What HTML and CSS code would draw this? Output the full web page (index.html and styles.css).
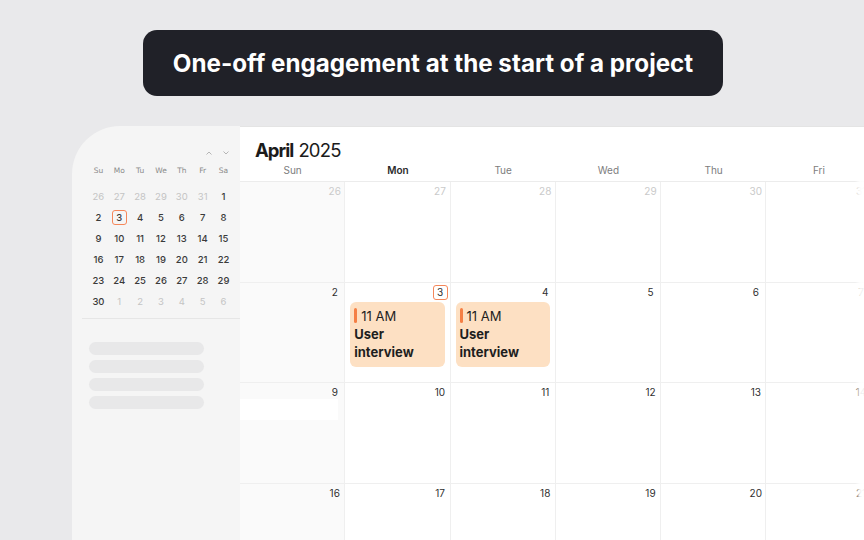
FILE: index.html
```html
<!DOCTYPE html>
<html lang="en">
<head>
<meta charset="utf-8">
<title>Calendar</title>
<link rel="stylesheet" href="styles.css">
</head>
<body>
<div class="banner-wrap">
  <div class="banner">One-off engagement at the start of a project</div>
</div>
<div class="app">
  <aside class="sidebar">
    <div class="mini-nav">
      <svg class="chev" width="8" height="6" viewBox="0 0 8 6"><path d="M1.5 4.5 L4 2 L6.5 4.5" fill="none" stroke="#b5b5b5" stroke-width="1"/></svg>
      <svg class="chev" width="8" height="6" viewBox="0 0 8 6"><path d="M1.5 1.5 L4 4 L6.5 1.5" fill="none" stroke="#b5b5b5" stroke-width="1"/></svg>
    </div>
    <div class="mini-head">
      <span>Su</span><span>Mo</span><span>Tu</span><span>We</span><span>Th</span><span>Fr</span><span>Sa</span>
    </div>
    <div class="mini-grid">
      <span class="muted">26</span><span class="muted">27</span><span class="muted">28</span><span class="muted">29</span><span class="muted">30</span><span class="muted">31</span><span>1</span>
      <span>2</span><span><b class="mini-today">3</b></span><span>4</span><span>5</span><span>6</span><span>7</span><span>8</span>
      <span>9</span><span>10</span><span>11</span><span>12</span><span>13</span><span>14</span><span>15</span>
      <span>16</span><span>17</span><span>18</span><span>19</span><span>20</span><span>21</span><span>22</span>
      <span>23</span><span>24</span><span>25</span><span>26</span><span>27</span><span>28</span><span>29</span>
      <span>30</span><span class="muted">1</span><span class="muted">2</span><span class="muted">3</span><span class="muted">4</span><span class="muted">5</span><span class="muted">6</span>
    </div>
    <div class="divider"></div>
    <div class="skeleton">
      <div class="bar"></div>
      <div class="bar"></div>
      <div class="bar"></div>
      <div class="bar"></div>
    </div>
  </aside>
  <main class="main">
    <div class="title"><b>April</b> <span class="year">2025</span></div>
    <div class="weekdays">
      <span>Sun</span><span class="cur">Mon</span><span>Tue</span><span>Wed</span><span>Thu</span><span>Fri</span><span>Sat</span>
    </div>
    <div class="grid">
      <div class="cell sun"><span class="num muted">26</span></div>
      <div class="cell"><span class="num muted">27</span></div>
      <div class="cell"><span class="num muted">28</span></div>
      <div class="cell"><span class="num muted">29</span></div>
      <div class="cell"><span class="num muted">30</span></div>
      <div class="cell"><span class="num muted">31</span></div>
      <div class="cell"><span class="num">1</span></div>

      <div class="cell sun"><span class="num">2</span></div>
      <div class="cell"><span class="num today">3</span>
        <div class="event"><div class="ev-time"><i class="ev-bar"></i>11 AM</div><div class="ev-title">User interview</div></div>
      </div>
      <div class="cell"><span class="num">4</span>
        <div class="event"><div class="ev-time"><i class="ev-bar"></i>11 AM</div><div class="ev-title">User interview</div></div>
      </div>
      <div class="cell"><span class="num">5</span></div>
      <div class="cell"><span class="num">6</span></div>
      <div class="cell"><span class="num">7</span></div>
      <div class="cell"><span class="num">8</span></div>

      <div class="cell sun"><span class="num">9</span><div class="stripe"></div></div>
      <div class="cell"><span class="num">10</span></div>
      <div class="cell"><span class="num">11</span></div>
      <div class="cell"><span class="num">12</span></div>
      <div class="cell"><span class="num">13</span></div>
      <div class="cell"><span class="num">14</span></div>
      <div class="cell"><span class="num">15</span></div>

      <div class="cell sun"><span class="num">16</span></div>
      <div class="cell"><span class="num">17</span></div>
      <div class="cell"><span class="num">18</span></div>
      <div class="cell"><span class="num">19</span></div>
      <div class="cell"><span class="num">20</span></div>
      <div class="cell"><span class="num">21</span></div>
      <div class="cell"><span class="num">22</span></div>
    </div>
  </main>
</div>
<div class="edge-fade"></div>
</body>
</html>
```
FILE: styles.css
```css
* { box-sizing: border-box; }
html, body {
  margin: 0;
  padding: 0;
  width: 864px;
  height: 540px;
  overflow: hidden;
  background: #e9e9eb;
  font-family: Inter, "Noto Sans", sans-serif;
  color: #222;
}
body { position: relative; }
.banner-wrap {
  display: flex;
  justify-content: center;
  padding-top: 30px;
  padding-left: 2px;
}
.banner {
  width: 580px;
  height: 66px;
  background: #202128;
  color: #fff;
  border-radius: 14px;
  display: flex;
  align-items: center;
  justify-content: center;
  font-size: 24.2px;
  font-weight: 700;
}
.app {
  display: flex;
  margin-top: 30px;
  margin-left: 72px;
  width: 920px;
  height: 414px;
}
.sidebar {
  width: 168px;
  flex: none;
  background: #f5f5f5;
  border-top-left-radius: 48px;
  padding: 20px 0 0 0;
}
.mini-nav {
  display: flex;
  justify-content: flex-end;
  align-items: center;
  gap: 9px;
  height: 14px;
  padding-right: 10px;
}
.chev { display: block; }
.mini-head, .mini-grid {
  display: grid;
  grid-template-columns: repeat(7, 20.85px);
  margin-left: 16px;
  text-align: center;
}
.mini-head span {
  height: 21px;
  line-height: 21px;
  font-size: 7.5px;
  color: #8a8a8a;
  font-family: "DejaVu Sans", sans-serif;
}
.mini-grid { margin-top: 5px; }
.mini-grid span {
  height: 21px;
  display: flex;
  align-items: center;
  justify-content: center;
  font-size: 9.5px;
  font-weight: 500;
  color: #3a3a3a;
}
.mini-grid span.muted { color: #c4c4c4; font-weight: 400; }
.mini-today {
  width: 15px;
  height: 15px;
  border: 1.5px solid #f5875a;
  border-radius: 3px;
  display: flex;
  align-items: center;
  justify-content: center;
  font-weight: 500;
}
.divider {
  height: 1px;
  background: #e6e6e6;
  margin: 6px 0 0 10px;
}
.skeleton {
  padding: 23px 0 0 17px;
  display: flex;
  flex-direction: column;
  gap: 5.5px;
}
.bar {
  width: 115px;
  height: 12.5px;
  background: #e8e8e9;
  border-radius: 7px;
}
.main {
  width: 740px;
  flex: none;
  background: #fff;
  border-top: 1px solid #e4e4e4;
}
.title {
  padding: 12px 0 0 15px;
  font-size: 18.5px;
  line-height: 22px;
  color: #1b1b1b;
}
.title b { font-weight: 700; letter-spacing: -1px; }
.title .year { letter-spacing: -0.8px; }
.weekdays {
  display: grid;
  grid-template-columns: repeat(7, 105.25px);
  height: 21px;
  border-bottom: 1px solid #ececec;
}
.weekdays span {
  text-align: center;
  font-size: 10px;
  line-height: 19px;
  color: #7d7d7d;
}
.weekdays span.cur { color: #2a2a2a; font-weight: 600; }
.grid {
  display: grid;
  grid-template-columns: repeat(7, 105.25px);
  grid-auto-rows: 100.7px;
}
.cell {
  border-right: 1px solid #efefef;
  border-bottom: 1px solid #efefef;
  display: flex;
  flex-direction: column;
  align-items: stretch;
}
.cell.sun { background: #fafafa; }
.num {
  align-self: flex-end;
  min-width: 15px;
  height: 15px;
  margin: 2px 2px 0 0;
  font-size: 10px;
  line-height: 15px;
  text-align: center;
  color: #2f2f2f;
}
.num.muted { color: #cacaca; }
.num.today {
  border: 1.5px solid #f5875a;
  border-radius: 3px;
  line-height: 12px;
}
.stripe {
  height: 21px;
  margin-top: -1px;
  margin-right: 6px;
  background: #fff;
}
.event {
  margin: 2px 5px 0 5px;
  height: 65px;
  background: #fde0c3;
  border-radius: 6px;
  padding: 5px 4px 0 4px;
  font-size: 13px;
  line-height: 18px;
  color: #1e1e1e;
}
.ev-time {
  display: flex;
  align-items: center;
}
.ev-bar {
  display: block;
  width: 3px;
  height: 15px;
  border-radius: 2px;
  background: #f57f45;
  margin-right: 4px;
}
.ev-title {
  font-weight: 700;
  line-height: 18.5px;
}
.edge-fade {
  position: absolute;
  top: 127px;
  right: 0;
  width: 9px;
  height: 413px;
  background: linear-gradient(to right, rgba(255,255,255,0), rgba(255,255,255,0.92) 55%);
  pointer-events: none;
}
```
